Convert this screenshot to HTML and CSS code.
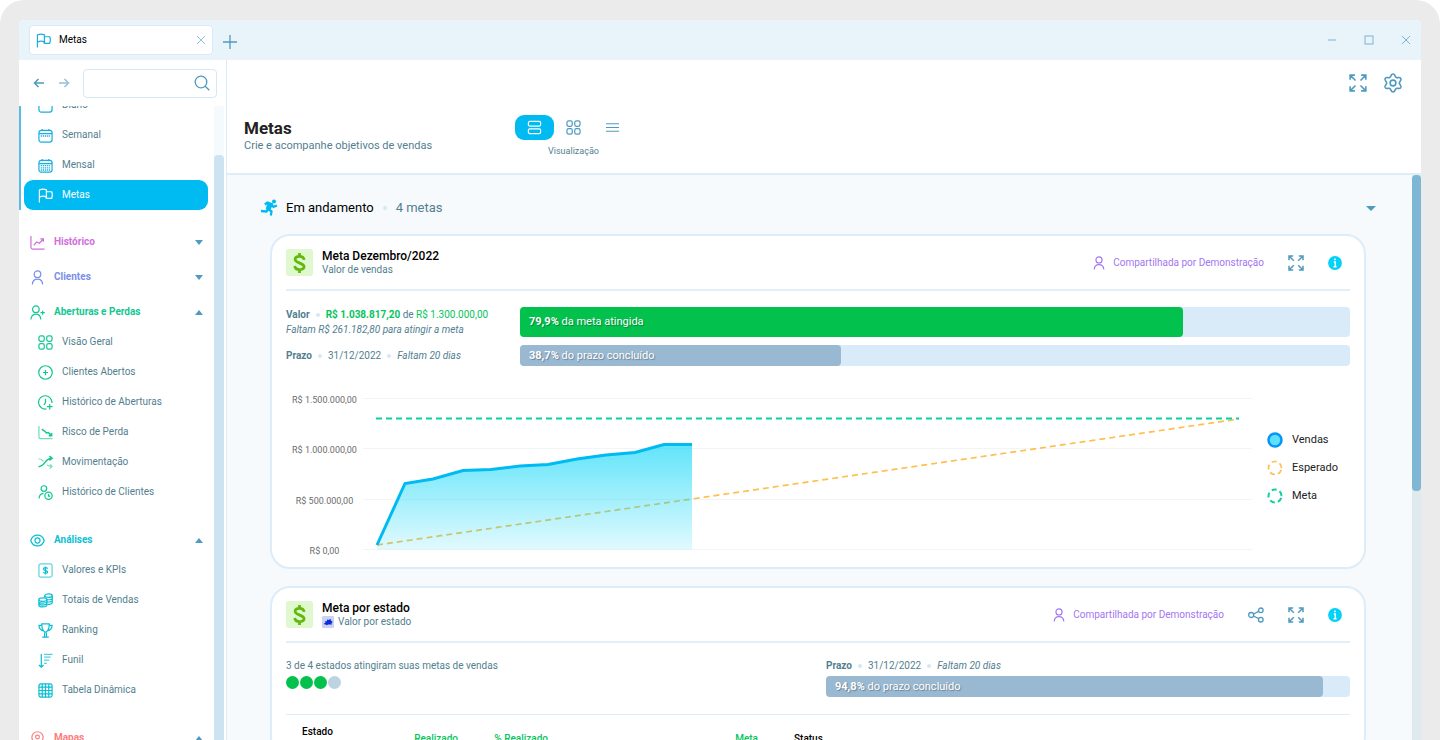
FILE: index.html
```html
<!DOCTYPE html>
<html lang="pt-BR">
<head>
<meta charset="utf-8">
<title>Metas</title>
<link rel="stylesheet" href="styles.css">
</head>
<body>
<svg class="sprite" aria-hidden="true">
  <symbol id="flag" viewBox="0 0 16 16"><path d="M1.500 15.500V2.200C4 .8 6.500 .8 9 2V9.500C6.500 8.300 4 8.500 1.500 9.800M9 4H14.600C15.300 5.500 15.300 9 14.600 11H9.500C8.500 11 8.300 10.400 8.300 9.500"/></symbol>
  <symbol id="calendar" viewBox="0 0 16 16"><rect x="1" y="2.500" width="14" height="12.500" rx="2.500"/><path d="M1 6H15M4.500 1V3.500M11.500 1V3.500"/></symbol>
  <symbol id="calendar-week" viewBox="0 0 16 16"><rect x="1" y="2.500" width="14" height="12.500" rx="2.500"/><path d="M1 6H15M4.500 1V3.500M11.500 1V3.500"/><path d="M3 8.500H13.500" stroke-width="1.800" stroke-dasharray="1.300 .8"/></symbol>
  <symbol id="calendar-month" viewBox="0 0 16 16"><rect x="1" y="2.500" width="14" height="12.500" rx="2.500"/><path d="M1 6H15M4.500 1V3.500M11.500 1V3.500"/><path d="M3 8.200H13.500M3 10.500H13.500M3 12.800H13.500" stroke-width="1.400" stroke-dasharray="1.300 .8"/></symbol>
  <symbol id="chart-up" viewBox="0 0 16 16"><path d="M1 1V13Q1 15 3 15H15.500M4 11L7 7.500L10 8.800L14 4.500M11 4.200H14.300V7.300"/></symbol>
  <symbol id="chart-down" viewBox="0 0 16 16"><path d="M1 1V13Q1 14.500 2.500 14.500H15.500" opacity=".6"/><path d="M4 4.500L7 6.500L9 8.500L11 8L14.500 11.500M11.500 11.500H14.500V8.500" stroke-width="1.600"/></symbol>
  <symbol id="person" viewBox="0 0 16 16"><circle cx="8" cy="4.500" r="3.500"/><path d="M2.500 15.500C2.700 11.500 5 9.800 8 9.800S13.300 11.500 13.500 15.500"/></symbol>
  <symbol id="person-plus" viewBox="0 0 16 16"><circle cx="6.300" cy="4.500" r="3.500"/><path d="M1 15.500C1 11.500 3.500 9.800 6.300 9.800S11.300 11.500 11.500 15.500M11.200 8.200H15.800M13.500 6V10.400"/></symbol>
  <symbol id="person-clock" viewBox="0 0 16 16"><circle cx="6.300" cy="3.800" r="3"/><path d="M1.200 14.500C1.200 11 3 9.300 6 9"/><circle cx="11.200" cy="11.500" r="3.900"/><path d="M11.200 9.500V11.800H13"/></symbol>
  <symbol id="grid4" viewBox="0 0 16 16"><rect x="1" y="1" width="5.700" height="5.700" rx="1.800"/><rect x="9.300" y="1" width="5.700" height="5.700" rx="1.800"/><rect x="1" y="9.300" width="5.700" height="5.700" rx="1.800"/><rect x="9.300" y="9.300" width="5.700" height="5.700" rx="1.800"/></symbol>
  <symbol id="circle-plus" viewBox="0 0 16 16"><circle cx="8" cy="8" r="7.200"/><path d="M8 5.200V10.800M5.200 8H10.800"/></symbol>
  <symbol id="clock-plus" viewBox="0 0 16 16"><path d="M9 14.900A7.100 7.100 0 1 1 14.800 8.500M8 4V8L6.300 10.500M12.500 9.500V15.500M9.500 12.500H15.500"/></symbol>
  <symbol id="shuffle" viewBox="0 0 16 16"><path d="M.5 12.500C7 12.500 7.500 3.500 14.500 3.500M12.200 1.200L15 3.500L12.200 5.800" stroke-width="1.600"/><path d="M.5 4C3.500 4 5 5.500 6 6.800M9.500 10.500C11 12 12.500 12 14.500 12M12.500 10L15 12L12.500 14.500" opacity=".6"/></symbol>
  <symbol id="eye" viewBox="0 0 16 16"><path d="M.8 8C2 4.300 5 2.200 8 2.200S14 4.300 15.200 8C14 11.700 11 13.800 8 13.800S2 11.700 .8 8Z"/><circle cx="8" cy="8" r="2.700"/></symbol>
  <symbol id="money" viewBox="0 0 16 16"><rect x="1" y="1" width="14" height="14" rx="2" opacity=".65"/><path d="M10.300 6C9.500 4.700 5.800 4.500 5.800 6.500S10.300 7.800 10.300 9.600S6.500 11.300 5.600 9.900M8 3.800V12.200" stroke-width="1.300"/></symbol>
  <symbol id="coins" viewBox="0 0 16 16"><ellipse cx="5.200" cy="7" rx="4.300" ry="1.900"/><path d="M.9 7V13C.9 15.500 9.500 15.500 9.500 13V7M.9 9C.9 11.500 9.500 11.500 9.500 9M.9 11C.9 13.500 9.500 13.500 9.500 11"/><ellipse cx="11.200" cy="2.800" rx="4" ry="1.800"/><path d="M7.200 3V5M15.200 3V10C15.200 11.500 13 12.300 10 12.200M15.200 5.300C15.200 7 12 7.500 9.500 7M15.200 7.700C15.200 9.400 12 9.900 9.500 9.400"/></symbol>
  <symbol id="trophy" viewBox="0 0 16 16"><path d="M4 1H12C12 6.500 11 8.500 8 9.800C5 8.500 4 6.500 4 1ZM4 2.500H1C1 6 3 7.800 6 8.500M12 2.500H15C15 6 13 7.800 10 8.500M7 10V14.800M9 10V14.800M4.500 15H11.500"/></symbol>
  <symbol id="funnel" viewBox="0 0 16 16"><path d="M3.500 1V15M1 12.800L3.500 15.200L6 12.800"/><path d="M6.500 1.500H15.500M6.500 4.500H13.500M6.500 7.500H12M6.500 11H9.500" opacity=".7"/></symbol>
  <symbol id="table" viewBox="0 0 16 16"><rect x="1" y="1" width="14" height="14" rx="2"/><path d="M4.500 1V15M8 1V15M11.500 1V15M1 4.500H15M1 8H15M1 11.500H15"/></symbol>
  <symbol id="pin" viewBox="0 0 16 16"><path d="M8 15.500C4 12 2 9.500 2 6.800A6 6 0 0 1 14 6.800C14 9.500 12 12 8 15.500Z"/><circle cx="8" cy="6.500" r="2"/></symbol>
  <symbol id="expand" viewBox="0 0 16 16"><path d="M1 5.200V1H5.200M1 1L5.800 5.800M10.800 1H15V5.200M15 1L10.200 5.800M1 10.800V15H5.200M1 15L5.800 10.200M15 10.800V15H10.800M15 15L10.200 10.200"/></symbol>
  <symbol id="gear" viewBox="0 0 20 20"><path d="M10 1C12.200 1 11.800 3.800 13.200 4.500C14.600 5.300 16.600 3.500 17.800 5.400C18.900 7.400 16.300 8.300 16.300 10S18.900 12.600 17.800 14.600C16.600 16.500 14.600 14.700 13.200 15.500C11.800 16.200 12.200 19 10 19S8.200 16.200 6.800 15.500C5.400 14.700 3.400 16.500 2.200 14.600C1.100 12.600 3.700 11.700 3.700 10S1.100 7.400 2.200 5.400C3.400 3.500 5.400 5.300 6.800 4.500C8.200 3.800 7.800 1 10 1Z"/><circle cx="10" cy="10" r="2.900"/></symbol>
  <symbol id="search" viewBox="0 0 16 16"><circle cx="7" cy="7" r="5.800"/><path d="M11.200 11.200L15.300 15.300"/></symbol>
  <symbol id="close" viewBox="0 0 10 10"><path d="M1 1L9 9M9 1L1 9"/></symbol>
  <symbol id="plus" viewBox="0 0 14 14"><path d="M7 0V14M0 7H14"/></symbol>
  <symbol id="minimize" viewBox="0 0 10 10"><path d="M1 5H9"/></symbol>
  <symbol id="maximize" viewBox="0 0 10 10"><rect x="1" y="1" width="8" height="8"/></symbol>
  <symbol id="arrow-left" viewBox="0 0 12 12"><path d="M11 6H1.500M5.500 2L1.500 6L5.500 10"/></symbol>
  <symbol id="arrow-right" viewBox="0 0 12 12"><path d="M1 6H10.500M6.500 2L10.500 6L6.500 10"/></symbol>
  <symbol id="rows" viewBox="0 0 16 16"><rect x="1.500" y="1.500" width="13" height="5" rx="1.500"/><rect x="1.500" y="9.500" width="13" height="5" rx="1.500"/></symbol>
  <symbol id="lines" viewBox="0 0 16 16"><path d="M1 4H15M1 8H15M1 12H15"/></symbol>
  <symbol id="share" viewBox="0 0 16 16"><circle cx="3.200" cy="8" r="2.500"/><circle cx="12.800" cy="3.300" r="2.300"/><circle cx="12.800" cy="12.700" r="2.300"/><path d="M5.500 7L10.700 4.300M5.500 9L10.700 11.700"/></symbol>
  <symbol id="info" viewBox="0 0 14 14"><circle cx="7" cy="7" r="6.900" fill="currentColor" stroke="none"/><path d="M7 2.500V4.200M5.700 6H7.300V10.800M5.500 10.800H8.600" stroke="#fff" stroke-width="1.500"/></symbol>
  <symbol id="runner" viewBox="0 0 18 18"><circle cx="14" cy="2.600" r="2" fill="currentColor" stroke="none"/><path d="M4.800 5.500L7.500 3.500L11.500 5L8.500 10L11.500 12.500L10.800 16.500M8 10.500L6.500 12.500L1 12M11.500 5.500L13.500 7.800L17 6.500" stroke-width="2.300"/><path d="M8 4.500L12 5.500L9.800 11L6.500 9.500Z" fill="currentColor"/></symbol>
  <symbol id="dollar" viewBox="0 0 16 24"><path d="M13 8.500C12.500 3.500 3.200 3.500 3.200 8S13 11.800 13 16S3.500 20.800 2.800 15.300M8 1V5M8 19V23" stroke-width="3" stroke-linecap="butt"/></symbol>
</svg>

<div class="app">
  <header class="titlebar">
    <div class="tab">
      <svg class="icon tab-icon"><use href="#flag"/></svg>
      <span class="tab-name">Metas</span>
      <button class="plain" aria-label="Fechar aba"><svg class="icon icon-xs faded"><use href="#close"/></svg></button>
    </div>
    <button class="plain new-tab" aria-label="Nova aba"><svg class="icon icon-sm"><use href="#plus"/></svg></button>
    <div class="window-controls">
      <button class="plain" aria-label="Minimizar"><svg class="icon icon-xs"><use href="#minimize"/></svg></button>
      <button class="plain" aria-label="Maximizar"><svg class="icon icon-xs"><use href="#maximize"/></svg></button>
      <button class="plain" aria-label="Fechar"><svg class="icon icon-xs"><use href="#close"/></svg></button>
    </div>
  </header>

  <div class="workspace">
    <aside class="sidebar">
      <div class="side-tools">
        <button class="plain" aria-label="Voltar"><svg class="icon arrow"><use href="#arrow-left"/></svg></button>
        <button class="plain" aria-label="Avançar"><svg class="icon arrow faded"><use href="#arrow-right"/></svg></button>
        <label class="search"><input type="text" aria-label="Buscar"><svg class="icon icon-md"><use href="#search"/></svg></label>
      </div>
      <div class="side-body">
        <nav class="nav">
          <div class="nav-list nav-list-current blue">
            <a class="nav-item" href="#"><svg class="icon"><use href="#calendar"/></svg><span>Diário</span></a>
            <a class="nav-item" href="#"><svg class="icon"><use href="#calendar-week"/></svg><span>Semanal</span></a>
            <a class="nav-item" href="#"><svg class="icon"><use href="#calendar-month"/></svg><span>Mensal</span></a>
            <a class="nav-item selected" href="#" aria-current="page"><svg class="icon"><use href="#flag"/></svg><span>Metas</span></a>
          </div>
          <button class="nav-head pink"><svg class="icon"><use href="#chart-up"/></svg><span>Histórico</span><i class="caret"></i></button>
          <button class="nav-head indigo"><svg class="icon"><use href="#person"/></svg><span>Clientes</span><i class="caret"></i></button>
          <button class="nav-head green"><svg class="icon"><use href="#person-plus"/></svg><span>Aberturas e Perdas</span><i class="caret up"></i></button>
          <div class="nav-list green">
            <a class="nav-item" href="#"><svg class="icon"><use href="#grid4"/></svg><span>Visão Geral</span></a>
            <a class="nav-item" href="#"><svg class="icon"><use href="#circle-plus"/></svg><span>Clientes Abertos</span></a>
            <a class="nav-item" href="#"><svg class="icon"><use href="#clock-plus"/></svg><span>Histórico de Aberturas</span></a>
            <a class="nav-item" href="#"><svg class="icon"><use href="#chart-down"/></svg><span>Risco de Perda</span></a>
            <a class="nav-item" href="#"><svg class="icon"><use href="#shuffle"/></svg><span>Movimentação</span></a>
            <a class="nav-item" href="#"><svg class="icon"><use href="#person-clock"/></svg><span>Histórico de Clientes</span></a>
          </div>
          <button class="nav-head teal"><svg class="icon"><use href="#eye"/></svg><span>Análises</span><i class="caret up"></i></button>
          <div class="nav-list teal">
            <a class="nav-item" href="#"><svg class="icon"><use href="#money"/></svg><span>Valores e KPIs</span></a>
            <a class="nav-item" href="#"><svg class="icon"><use href="#coins"/></svg><span>Totais de Vendas</span></a>
            <a class="nav-item" href="#"><svg class="icon"><use href="#trophy"/></svg><span>Ranking</span></a>
            <a class="nav-item" href="#"><svg class="icon"><use href="#funnel"/></svg><span>Funil</span></a>
            <a class="nav-item" href="#"><svg class="icon"><use href="#table"/></svg><span>Tabela Dinâmica</span></a>
          </div>
          <button class="nav-head coral"><svg class="icon"><use href="#pin"/></svg><span>Mapas</span><i class="caret up"></i></button>
        </nav>
        <div class="side-scroll"><div class="side-thumb"></div></div>
      </div>
    </aside>

    <main class="main">
      <div class="toolbar">
        <button class="plain" aria-label="Tela cheia"><svg class="icon icon-lg"><use href="#expand"/></svg></button>
        <button class="plain" aria-label="Configurações"><svg class="icon icon-xl"><use href="#gear"/></svg></button>
      </div>
      <div class="page-head">
        <div class="page-title">
          <h1>Metas</h1>
          <p>Crie e acompanhe objetivos de vendas</p>
        </div>
        <div class="view">
          <div class="view-buttons">
            <button class="view-button active" aria-label="Cartões"><svg class="icon"><use href="#rows"/></svg></button>
            <button class="view-button" aria-label="Grade"><svg class="icon"><use href="#grid4"/></svg></button>
            <button class="view-button" aria-label="Lista"><svg class="icon"><use href="#lines"/></svg></button>
          </div>
          <span class="view-label">Visualização</span>
        </div>
      </div>

      <div class="content">
        <div class="goals">
          <div class="section-head">
            <svg class="icon icon-lg runner"><use href="#runner"/></svg>
            <h2>Em andamento</h2>
            <i class="dot"></i>
            <span class="count">4 metas</span>
            <button class="plain" aria-label="Recolher"><i class="caret wide"></i></button>
          </div>

          <article class="card">
            <header class="card-head">
              <span class="badge"><svg class="dollar"><use href="#dollar"/></svg></span>
              <div class="card-title"><h3>Meta Dezembro/2022</h3><p>Valor de vendas</p></div>
              <span class="shared"><svg class="icon icon-sm"><use href="#person"/></svg>Compartilhada por Demonstração</span>
              <button class="plain" aria-label="Expandir"><svg class="icon icon-md expand"><use href="#expand"/></svg></button>
              <button class="plain" aria-label="Informações"><svg class="icon icon-sm info"><use href="#info"/></svg></button>
            </header>
            <div class="progress">
              <div class="facts">
                <p><b>Valor</b><i class="dot"></i><span><b class="money">R$ 1.038.817,20</b> de <span class="money">R$ 1.300.000,00</span></span></p>
                <p><em>Faltam R$ 261.182,80 para atingir a meta</em></p>
              </div>
              <div class="bar tall"><div class="fill good" style="width: 79.9%"><b>79,9%</b> da meta atingida</div></div>
              <div class="facts">
                <p><b>Prazo</b><i class="dot"></i>31/12/2022<i class="dot"></i><em>Faltam 20 dias</em></p>
              </div>
              <div class="bar"><div class="fill" style="width: 38.7%"><b>38,7%</b> do prazo concluído</div></div>
            </div>
            <div class="chart">
              <div class="axis"><span>R$ 1.500.000,00</span><span>R$ 1.000.000,00</span><span>R$ 500.000,00</span><span>R$ 0,00</span></div>
              <svg class="plot" viewBox="0 0 889 168" preserveAspectRatio="none" role="img" aria-label="Vendas acumuladas">
                <defs><linearGradient id="area" x1="0" y1="0" x2="0" y2="1"><stop offset="0" stop-color="#00d4f7" stop-opacity=".62"/><stop offset="1" stop-color="#00d4f7" stop-opacity=".12"/></linearGradient></defs>
                <path class="gridline" d="M0 8.500H889M0 58.500H889M0 109.500H889M0 159.500H889"/>
                <path class="expected" d="M14 155L876 29"/>
                <path fill="url(#area)" d="M14 155L42 93.500L70 89L100 80.500L128 79.500L157 76L185 74.500L214 69L243 65L272 62.500L301 54.500H329V159.500H14Z"/>
                <path class="sales" d="M14 155L42 93.500L70 89L100 80.500L128 79.500L157 76L185 74.500L214 69L243 65L272 62.500L301 54.500H329"/>
                <path class="target" d="M13 28.500H876"/>
              </svg>
              <ul class="legend">
                <li><svg class="key" viewBox="0 0 16 16"><circle cx="8" cy="8" r="6.500" fill="#5ee0f8" stroke="#0597f5" stroke-width="2.500"/></svg>Vendas</li>
                <li><svg class="key" viewBox="0 0 16 16"><circle cx="8" cy="8" r="6.500" fill="none" stroke="#fdc04c" stroke-width="1.700" stroke-dasharray="5 3.170" stroke-dashoffset="-2"/></svg>Esperado</li>
                <li><svg class="key" viewBox="0 0 16 16"><circle cx="8" cy="8" r="6.500" fill="none" stroke="#0bd0a0" stroke-width="2" stroke-dasharray="5 3.170" stroke-dashoffset="-2"/></svg>Meta</li>
              </ul>
            </div>
          </article>

          <article class="card">
            <header class="card-head">
              <span class="badge"><svg class="dollar"><use href="#dollar"/></svg></span>
              <div class="card-title"><h3>Meta por estado</h3><p><svg class="map" viewBox="0 0 12 12"><rect width="12" height="12" rx="1" fill="#ccd2f5"/><path d="M1.500 8L3.500 6.500L3.200 5L5 5.200V3.500L6.500 4L8.500 3L9 4.500L10.800 6L9.500 7L10 8.500L6 8.500L5 9.200L3.500 8.500Z" fill="#0a2fd8"/></svg>Valor por estado</p></div>
              <span class="shared"><svg class="icon icon-sm"><use href="#person"/></svg>Compartilhada por Demonstração</span>
              <button class="plain" aria-label="Compartilhar"><svg class="icon icon-md"><use href="#share"/></svg></button>
              <button class="plain" aria-label="Expandir"><svg class="icon icon-md expand"><use href="#expand"/></svg></button>
              <button class="plain" aria-label="Informações"><svg class="icon icon-sm info"><use href="#info"/></svg></button>
            </header>
            <div class="summary">
              <div class="facts">
                <p>3 de 4 estados atingiram suas metas de vendas</p>
                <div class="states"><i class="done"></i><i class="done"></i><i class="done"></i><i></i></div>
              </div>
              <div class="facts">
                <p><b>Prazo</b><i class="dot"></i>31/12/2022<i class="dot"></i><em>Faltam 20 dias</em></p>
                <div class="bar"><div class="fill" style="width: 94.8%"><b>94,8%</b> do prazo concluído</div></div>
              </div>
            </div>
            <table class="states-table">
              <thead><tr><th class="state">Estado</th><th class="num done-col">Realizado</th><th class="num rate">% Realizado</th><th class="num goal">Meta</th><th class="status">Status</th></tr></thead>
            </table>
          </article>
        </div>
        <div class="scroll"><div class="thumb"></div></div>
      </div>
    </main>
  </div>
</div>
</body>
</html>
```
FILE: styles.css
```css
* { box-sizing: border-box; }
html { background: #fff; }
body {
  margin: 0;
  height: 100vh;
  overflow: hidden;
  padding: 20px 19px 0;
  background: #ebebeb;
  border-radius: 24px 24px 0 0;
  font: 10px/14px Roboto, "Liberation Sans", sans-serif;
  color: #52808f;
}
h1, h2, h3, p, ul { margin: 0; padding: 0; font-weight: 400; }
button, input { font: inherit; color: inherit; }
b { font-weight: 700; }
.sprite { position: absolute; width: 0; height: 0; }
.icon {
  display: block;
  flex: none;
  width: 15px;
  height: 15px;
  fill: none;
  stroke: currentColor;
  stroke-width: 1.3;
}
.icon-xs { width: 10px; height: 10px; stroke-width: 1; }
.icon-sm { width: 14px; height: 14px; }
.icon-md { width: 16px; height: 16px; }
.icon-lg { width: 18px; height: 18px; stroke-width: 1.4; }
.icon-xl { width: 20px; height: 20px; stroke-width: 1.6; }
.faded { opacity: .6; }
.plain { padding: 0; border: 0; background: none; color: #4f9abf; }
.blue { color: #1aaee0; }
.pink { color: #d06edb; }
.indigo { color: #7b8fe8; }
.green { color: #12c791; }
.teal { color: #0bbfd3; }
.coral { color: #fa8080; }

.app { display: flex; flex-direction: column; height: 100%; background: #fff; border-radius: 5px 5px 0 0; overflow: hidden; }
.titlebar { display: flex; flex: none; align-items: center; height: 40px; padding: 0 10px; background: #e8f3fa; }
.tab {
  display: flex; align-items: center;
  width: 184px; height: 30px; padding: 0 6px;
  background: #fff; border: 1px solid #d6eaf7; border-radius: 4px; color: #1aaee0;
}
.tab-name { flex: 1; padding-left: 8px; color: #000; }
.new-tab { margin: 4px 0 0 10px; }
.window-controls { display: flex; gap: 27px; margin-left: auto; opacity: .7; }

.workspace { display: flex; flex: 1; min-height: 0; }
.sidebar { display: flex; flex: none; flex-direction: column; width: 208px; border-right: 1px solid #d9ecf8; }
.side-tools { display: flex; flex: none; align-items: center; gap: 13px; height: 46px; padding: 0 9px 0 14px; }
.arrow { width: 12px; height: 12px; stroke-width: 1.5; }
.search {
  display: flex; flex: 1; align-items: center; min-width: 0; height: 29px; padding: 0 6px;
  border: 1px solid #d4e8f6; border-radius: 4px; color: #4f9abf;
}
.search input { flex: 1; width: 0; min-width: 0; padding: 0; border: 0; outline: 0; background: none; }
.side-body { display: flex; flex: 1; min-height: 0; overflow: hidden; }
.nav { flex: 1; }
.side-scroll { width: 10px; margin-right: 2px; padding-top: 49px; background: #f5fafd; }
.side-thumb { height: 100%; background: #cde3f1; border-radius: 4px 4px 0 0; }
.nav-list { padding: 0 6px 13px 5px; }
.nav-list-current { margin-top: -16px; padding: 0 6px 0 3px; margin-bottom: 17px; border-left: 2px solid #5cbbe0; }
.nav-item { display: flex; align-items: center; gap: 9px; height: 30px; padding-left: 14px; border-radius: 9px; color: inherit; text-decoration: none; }
.nav-item span { color: #52808f; }
.selected, .selected span { color: #fff; }
.selected { background: #00baf2; }
.nav-head {
  display: flex; align-items: center; gap: 9px;
  width: 100%; height: 30px; margin: 5px 0 0; padding: 0 11px;
  border: 0; background: none; font-weight: 700; text-align: left;
}
.caret { margin-left: auto; border: 4px solid transparent; border-top: 5px solid #4f9abf; border-bottom: 0; }
.caret.up { border-top: 0; border-bottom: 5px solid #4f9abf; }
.caret.wide { display: block; border-width: 5px 5px 0; }

.main { display: flex; flex: 1; flex-direction: column; min-width: 0; }
.toolbar { display: flex; flex: none; justify-content: flex-end; align-items: center; gap: 16px; height: 46px; padding-right: 18px; }
.page-head { display: flex; flex: none; gap: 84px; height: 69px; padding: 9px 17px 0; border-bottom: 2px solid #deeef8; }
.page-title { width: 187px; white-space: nowrap; font-size: 11px; }
.page-title h1 { margin-top: 2px; font-size: 17px; line-height: 22px; font-weight: 700; color: #222; }
.view-buttons { display: flex; }
.view-button {
  display: grid; place-items: center; width: 39px; height: 25px; padding: 0;
  border: 0; border-radius: 9px; background: none; color: #4f9abf;
}
.view-button.active { background: #00baf2; color: #fff; }
.view-label { display: block; margin-top: 4px; font-size: 9px; text-align: center; }

.content { display: flex; flex: 1; min-height: 0; background: #f6fafd; }
.goals { flex: 1; min-width: 0; overflow: hidden; padding: 17px 46px 0 43px; }
.scroll { flex: none; width: 9px; background: #dfeaef; }
.thumb { height: 56%; background: #7db7d4; border-radius: 4px; }
.section-head { display: flex; align-items: center; height: 32px; margin: 0 -10px 10px; font-size: 13px; }
.section-head h2 { margin-left: 8px; font-size: 13px; color: #000; }
.section-head .plain { margin-left: auto; }
.runner { color: #00baf2; }
.dot { display: inline-block; flex: none; width: 4px; height: 4px; margin: 0 6px; border-radius: 50%; background: #d5e8f5; }
.section-head .dot { margin: 0 9px; }

.card { margin-bottom: 17px; padding: 0 14px 9px; background: #fff; border: 2px solid #dcecf8; border-radius: 20px; }
.card-head { display: flex; align-items: center; height: 55px; border-bottom: 2px solid #e3f0f9; }
.badge { display: grid; place-items: center; width: 27px; height: 27px; background: #dff8cd; border-radius: 3px; color: #62b80c; }
.dollar { width: 15px; height: 22px; fill: none; stroke: currentColor; }
.card-title { margin-left: 9px; line-height: 13px; }
.card-title h3 { font-size: 12px; line-height: 14px; font-weight: 500; color: #000; }
.card-title p { display: flex; align-items: center; gap: 4px; }
.map { width: 12px; height: 12px; }
.shared { display: flex; align-items: center; gap: 7px; margin-left: auto; color: #a376f0; }
.card-head .plain { margin-left: 24px; }
.card-head .plain:last-child { margin-right: 8px; }
.expand { stroke-width: 1.5; }
.info { color: #00d2f8; }
.progress { display: grid; grid-template-columns: 234px 1fr; row-gap: 8px; align-items: center; padding-top: 16px; }
.facts p { display: flex; align-items: center; line-height: 15px; white-space: nowrap; }
.facts p > span { white-space: pre-wrap; }
.money { color: #05c55c; }
.bar { background: #d9ebf8; border-radius: 4px; }
.fill {
  height: 21px; padding-left: 9px; border-radius: 4px; background: #99b8d2;
  color: #fff; font-size: 11px; line-height: 21px; text-shadow: 1px 1px 1px rgba(0, 0, 0, .3);
}
.tall .fill { height: 30px; line-height: 30px; }
.good { background: #03c14d; }
.chart { display: flex; margin-top: 24px; }
.axis { display: flex; flex-direction: column; justify-content: space-between; width: 77px; height: 168px; padding-top: 3px; font-size: 9px; text-align: center; color: #6c6c6c; }
.plot { flex: 1; min-width: 0; height: 168px; }
.gridline { fill: none; stroke: #f2f4f5; vector-effect: non-scaling-stroke; }
.expected { fill: none; stroke: #fdc04c; stroke-width: 1.7; stroke-dasharray: 6 4; vector-effect: non-scaling-stroke; }
.sales { fill: none; stroke: #00baf2; stroke-width: 3; vector-effect: non-scaling-stroke; }
.target { fill: none; stroke: #0bd0a0; stroke-width: 2; stroke-dasharray: 6 4; vector-effect: non-scaling-stroke; }
.legend { display: flex; flex-direction: column; justify-content: center; gap: 12px; width: 98px; padding: 0 0 12px 15px; list-style: none; font-size: 11px; color: #222; }
.legend li { display: flex; align-items: center; gap: 9px; }
.key { width: 16px; height: 16px; }
.summary { display: grid; grid-template-columns: 1fr 1fr; gap: 16px; padding: 15px 0 17px; border-bottom: 1px solid #deeef8; }
.summary .facts p { margin-bottom: 3px; }
.states { display: flex; gap: 1px; }
.states i { width: 13px; height: 13px; border-radius: 50%; background: #bdd3e2; }
.states .done { background: #03c14d; }
.states-table { width: 100%; margin-top: 10px; border-collapse: collapse; table-layout: fixed; }
.states-table th { height: 21px; padding: 0; font-weight: 500; color: #05c55c; vertical-align: bottom; text-align: left; }
.states-table .num { text-align: right; }
.states-table .state { width: 112px; padding-left: 16px; color: #000; vertical-align: top; }
.states-table .done-col { width: 60px; }
.states-table .rate { width: 90px; }
.states-table .goal { width: 210px; }
.states-table .status { padding-left: 36px; color: #000; }
```
